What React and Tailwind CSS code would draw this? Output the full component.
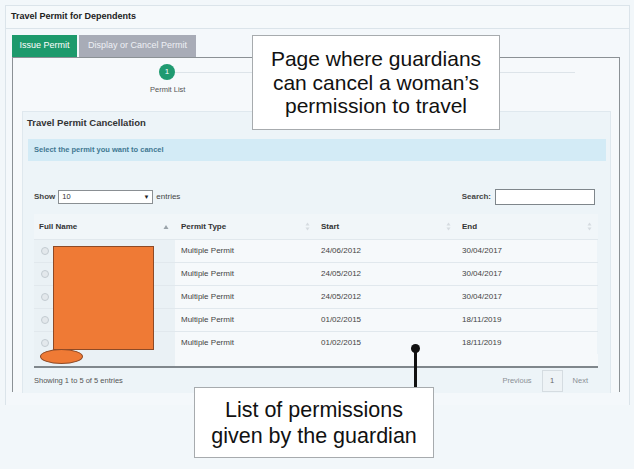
import React from "react";

const SortBoth = () => (
  <svg width="5" height="9" viewBox="0 0 5 9" className="flex-none">
    <path d="M2.5 0.5 L4.5 3.5 L0.5 3.5 Z" fill="#d5dbe0" />
    <path d="M2.5 8.5 L4.5 5.5 L0.5 5.5 Z" fill="#d5dbe0" />
  </svg>
);

const SortUp = () => (
  <svg width="6" height="6" viewBox="0 0 6 6" className="flex-none">
    <path d="M3 1 L5.5 5 L0.5 5 Z" fill="#9aa3aa" />
  </svg>
);

const rows = [
  ["Multiple Permit", "24/06/2012", "30/04/2017"],
  ["Multiple Permit", "24/05/2012", "30/04/2017"],
  ["Multiple Permit", "24/05/2012", "30/04/2017"],
  ["Multiple Permit", "01/02/2015", "18/11/2019"],
  ["Multiple Permit", "01/02/2015", "18/11/2019"],
];

export default function App() {
  return (
    <div
      className="relative w-[634px] h-[469px] overflow-hidden bg-[#f2f7fa] text-[#333]"
      style={{ fontFamily: '"Liberation Sans", Arial, sans-serif' }}
    >
      {/* Outer panel */}
      <div className="ml-[5px] mt-[5px] w-[625px] h-[400px] border border-b-0 border-[#dbe4ea] bg-[#f4f8fb]">
        <div className="h-[23px] flex items-center pl-[5px] border-b border-[#dbe4ea] bg-[#f5f9fb]">
          <span className="text-[9px] font-bold text-[#222]">Travel Permit for Dependents</span>
        </div>
        <div className="pl-[6px] pt-[6px]">
          {/* Tabs */}
          <div className="flex gap-[2px] h-[22px]">
            <div className="w-[65px] bg-[#1d9a6c] text-white text-[9px] flex items-center justify-center">
              Issue Permit
            </div>
            <div className="w-[117px] bg-[#a8acb7] text-[#eef0f5] text-[9px] flex items-center justify-center">
              Display or Cancel Permit
            </div>
          </div>
          {/* Frame */}
          <div className="w-[608px] h-[335px] border border-b-0 border-[#8b9195] bg-[#f6f9fb] flex flex-col">
            {/* Step area */}
            <div className="h-[53px] flex-none pt-[6px]">
              <div className="flex items-center pl-[146px]">
                <div className="w-[16px] h-[16px] rounded-full bg-[#1f9a70] text-white text-[8px] flex items-center justify-center flex-none">
                  1
                </div>
                <div className="h-px w-[400px] bg-[#dde4e9]" />
              </div>
              <div className="mt-[5px] pl-[137px] text-[7.5px] leading-[10px] text-[#555]">Permit List</div>
            </div>
            {/* Inner panel */}
            <div className="ml-[9px] mr-[8px] flex-1 border border-b-0 border-[#dfe8ee] bg-[#edf4f8] flex flex-col">
              <div className="h-[22px] flex items-center pl-[4px]">
                <span className="text-[9.5px] font-bold text-[#333]">Travel Permit Cancellation</span>
              </div>
              <div className="ml-[5px] mr-[4px] mt-[5px] h-[22px] bg-[#d3ebf6] flex items-center pl-[6px]">
                <span className="text-[7.5px] font-bold text-[#3f7892]">Select the permit you want to cancel</span>
              </div>
              {/* Table area */}
              <div className="ml-[11px] mr-[12px] mt-[28px]">
                <div className="h-[16px] flex items-center justify-between">
                  <div className="flex items-center">
                    <span className="text-[8px] font-bold text-[#444]">Show</span>
                    <div className="ml-[3px] w-[95px] h-[14px] border border-[#8a8f93] bg-white flex items-center justify-between px-[3px]">
                      <span className="text-[7.5px] text-[#333]">10</span>
                      <span className="text-[6px] text-[#222]">▼</span>
                    </div>
                    <span className="ml-[3px] text-[8px] text-[#444]">entries</span>
                  </div>
                  <div className="flex items-center mr-[3px]">
                    <span className="text-[8px] font-bold text-[#444]">Search:</span>
                    <div className="ml-[4px] w-[100px] h-[16px] border border-[#7f868b] bg-white" />
                  </div>
                </div>
                {/* Table */}
                <div className="mt-[9px]">
                  <div className="h-[25px] flex items-center bg-[#f1f6f9]">
                    <div className="w-[141px] flex items-center justify-between pl-[5px] pr-[6px]">
                      <span className="text-[8px] font-bold text-[#333]">Full Name</span>
                      <SortUp />
                    </div>
                    <div className="w-[141px] flex items-center justify-between pl-[6px] pr-[6px]">
                      <span className="text-[8px] font-bold text-[#333]">Permit Type</span>
                      <SortBoth />
                    </div>
                    <div className="w-[141px] flex items-center justify-between pl-[5px] pr-[6px]">
                      <span className="text-[8px] font-bold text-[#333]">Start</span>
                      <SortBoth />
                    </div>
                    <div className="w-[140px] flex items-center justify-between pl-[5px] pr-[5px]">
                      <span className="text-[8px] font-bold text-[#333]">End</span>
                      <SortBoth />
                    </div>
                  </div>
                  {rows.map((r, i) => (
                    <div key={i} className="h-[23px] flex border-t border-[#e1e8ed] first:border-t-0 text-[8px] text-[#444]">
                      <div className="w-[141px] bg-[#eaf1f5] flex items-center pl-[7px]">
                        <div className="w-[8px] h-[8px] rounded-full border border-[#c3cbd1] bg-[#e3e8ec]" />
                      </div>
                      <div className="w-[141px] bg-[#f6f9fb] flex items-center pl-[6px]">{r[0]}</div>
                      <div className="w-[141px] bg-[#f6f9fb] flex items-center pl-[5px]">{r[1]}</div>
                      <div className="w-[140px] bg-[#f6f9fb] flex items-center pl-[5px]">{r[2]}</div>
                    </div>
                  ))}
                  <div className="h-[12px] flex">
                    <div className="w-[141px] bg-[#eaf1f5]" />
                    <div className="flex-1 bg-[#f6f9fb]" />
                  </div>
                  <div className="h-[2px] bg-[#80878c]" />
                </div>
                {/* Footer */}
                <div className="h-[25px] flex items-center justify-between">
                  <span className="text-[7.5px] text-[#555]">Showing 1 to 5 of 5 entries</span>
                  <div className="flex items-center pr-[10px] text-[7.5px] text-[#8a9095]">
                    <span>Previous</span>
                    <div className="ml-[10px] w-[21px] h-[22px] border border-[#d5dce1] bg-[#eef3f6] flex items-center justify-center text-[#666]">
                      1
                    </div>
                    <span className="ml-[10px]">Next</span>
                  </div>
                </div>
              </div>
            </div>
          </div>
        </div>
      </div>

      {/* Orange redaction */}
      <div className="absolute left-[53px] top-[246px] w-[101px] h-[104px] bg-[#ef7a35] border border-[#8e4a26]" />
      <div className="absolute left-[40px] top-[349px] w-[43px] h-[15px] rounded-[50%] bg-[#ef7a35] border-[1.5px] border-[#8e4a26]" />

      {/* Callout 1 */}
      <div className="absolute left-[252px] top-[35px] w-[248px] h-[95px] bg-white border-[1.5px] border-[#a7abae] flex items-center justify-center">
        <p className="text-center text-[21px] leading-[23.5px] text-[#111]">
          Page where guardians
          <br />
          can cancel a woman’s
          <br />
          permission to travel
        </p>
      </div>

      {/* Connector + dot */}
      <div className="absolute left-[411px] top-[344px] w-[9px] h-[9px] rounded-full bg-[#111]" />
      <div className="absolute left-[414px] top-[350px] w-[2.5px] h-[38px] bg-[#111]" />

      {/* Callout 2 */}
      <div className="absolute left-[194px] top-[387px] w-[240px] h-[71px] bg-white border-[1.5px] border-[#a7abae] flex items-center justify-center">
        <p className="text-center text-[21.5px] leading-[26px] text-[#111]">
          List of permissions
          <br />
          given by the guardian
        </p>
      </div>
    </div>
  );
}
